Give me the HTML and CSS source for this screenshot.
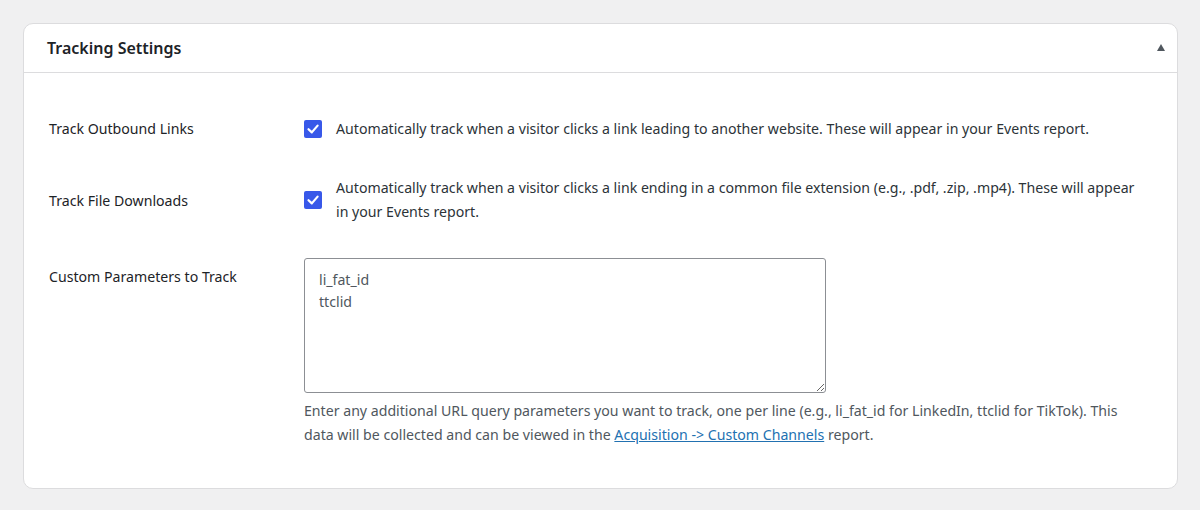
FILE: index.html
```html
<!DOCTYPE html>
<html>
<head>
<meta charset="utf-8">
<link rel="stylesheet" href="styles.css">
</head>
<body>
<div class="card">
  <div class="card-head">
    <h2 class="title">Tracking Settings</h2>
    <span class="toggle"></span>
  </div>
  <div class="card-body">
    <div class="row row-center">
      <div class="label">Track Outbound Links</div>
      <label class="check">
        <span class="box"><svg viewBox="0 0 18 18" width="18" height="18"><path d="M4.5 9.2 L7.8 12.4 L13.6 5.6" fill="none" stroke="#fff" stroke-width="2.2" stroke-linecap="round" stroke-linejoin="round"/></svg></span>
        <span class="desc">Automatically track when a visitor clicks a link leading to another website. These will appear in your Events report.</span>
      </label>
    </div>
    <div class="row row-center row2">
      <div class="label">Track File Downloads</div>
      <label class="check">
        <span class="box"><svg viewBox="0 0 18 18" width="18" height="18"><path d="M4.5 9.2 L7.8 12.4 L13.6 5.6" fill="none" stroke="#fff" stroke-width="2.2" stroke-linecap="round" stroke-linejoin="round"/></svg></span>
        <span class="desc">Automatically track when a visitor clicks a link ending in a common file extension (e.g., .pdf, .zip, .mp4). These will appear in your Events report.</span>
      </label>
    </div>
    <div class="row row3">
      <div class="label label-top">Custom Parameters to Track</div>
      <div class="field">
        <textarea class="params">li_fat_id
ttclid</textarea>
        <p class="help">Enter any additional URL query parameters you want to track, one per line (e.g., li_fat_id for LinkedIn, ttclid for TikTok). This data will be collected and can be viewed in the <a href="#">Acquisition -&gt; Custom Channels</a> report.</p>
      </div>
    </div>
  </div>
</div>
</body>
</html>
```

FILE: styles.css
```css
html, body {
  margin: 0;
  padding: 0;
  background: #f0f0f1;
}
body {
  font-family: "Noto Sans", "Open Sans", sans-serif;
  font-size: 14.15px;
  color: #1d2327;
  padding: 23px 22px 0 23px;
}
.card {
  background: #fff;
  border: 1px solid #dcdcde;
  border-radius: 10px;
  width: 1153px;
}
.card-head {
  height: 48px;
  border-bottom: 1px solid #dcdcde;
  display: flex;
  align-items: center;
  justify-content: space-between;
  padding: 0 12px 0 23px;
}
.title {
  margin: 0;
  font-size: 16px;
  font-weight: 600;
  color: #1d2327;
}
.toggle {
  width: 0;
  height: 0;
  border-left: 4.5px solid transparent;
  border-right: 4.5px solid transparent;
  border-bottom: 7px solid #50575e;
  margin-bottom: 2px;
}
.card-body {
  padding: 44px 25px 41px 25px;
}
.row {
  display: grid;
  grid-template-columns: 255px 1fr;
  line-height: 24px;
}
.row-center {
  align-items: center;
}
.row2 {
  margin-top: 35px;
}
.row2 .label {
  padding-top: 2px;
}
.row3 {
  margin-top: 34px;
}
.label {
  color: #1d2327;
}
.label-top {
  padding-top: 7px;
}
.check {
  display: flex;
  align-items: center;
  gap: 14px;
}
.box {
  flex: none;
  width: 18px;
  height: 18px;
  border-radius: 2px;
  background: #3858e9;
  display: block;
}
.box svg {
  display: block;
}
.desc {
  color: #2c3338;
  max-width: 805px;
}
.field {
  display: flex;
  flex-direction: column;
}
.params {
  width: 522px;
  height: 135px;
  box-sizing: border-box;
  border: 1px solid #8c8f94;
  border-radius: 3px;
  padding: 10px 14px;
  font-family: "Noto Sans", "Open Sans", sans-serif;
  font-size: 14.15px;
  line-height: 22px;
  color: #50575e;
  margin: 0;
}
.help {
  margin: 6px 0 0 0;
  color: #50575e;
  line-height: 24px;
  max-width: 822px;
}
.help a {
  color: #2271b1;
}
```
